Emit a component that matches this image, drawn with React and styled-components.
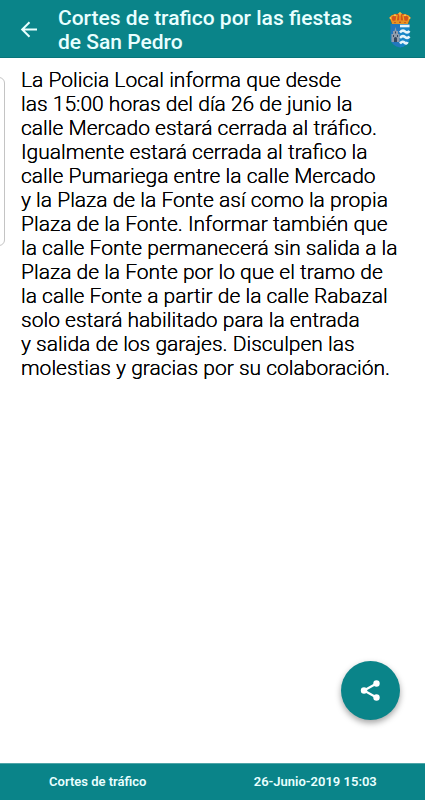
import React from "react";
import styled, { createGlobalStyle } from "styled-components";

const teal = "#0a8489";

const GlobalStyle = createGlobalStyle`
* {
  box-sizing: border-box;
  padding: 0;
  margin: 0;
}
body {
  background: #fff;
  font-family: Roboto, sans-serif;
}
`
const Page = styled.div`
  min-height: 100vh;
  display: flex;
  flex-direction: column;
`
const Header = styled.header`
  background: ${teal};
  border-bottom: 1px solid #08757a;
  display: flex;
  align-items: center;
  padding: 6px 14px 3px 18px;
`
const BackButton = styled.button`
  display: flex;
  width: 22px;
  height: 22px;
  border: none;
  background: none;
  cursor: pointer;
`
const Title = styled.h1`
  flex: 1;
  margin: 0 22px 0 18px;
  color: #e9ffff;
  font-size: 21px;
  font-weight: 500;
  line-height: 24px;
`
const Main = styled.main`
  flex: 1;
  padding: 10px 16px 10px 21px;
`
const Notice = styled.p`
  color: #000;
  font-size: 21px;
  font-weight: 300;
  line-height: 24px;
  text-shadow: 0 0 0 #000;
  white-space: pre-line;
`
const EdgeHandle = styled.div`
  position: absolute;
  top: 77px;
  left: -8px;
  width: 13px;
  height: 169px;
  border: 1px solid #c4c4c4;
  border-radius: 6px;
`
const ShareButton = styled.button`
  position: fixed;
  right: 25px;
  bottom: 80px;
  width: 59px;
  height: 59px;
  display: flex;
  align-items: center;
  justify-content: center;
  border: none;
  border-radius: 50%;
  background: ${teal};
  box-shadow: 0 3px 6px rgba(0, 0, 0, 0.36);
  cursor: pointer;
`
const Footer = styled.footer`
  height: 37px;
  background: ${teal};
  border-top: 1px solid #4fa5a8;
  display: grid;
  grid-template-columns: 46% 1fr;
  column-gap: 10px;
  align-items: center;
  text-align: center;
`
const FooterText = styled.span`
  color: #e9ffff;
  font-size: 13px;
  font-weight: 600;
  line-height: 16px;
`

const notice = `La Policia Local informa que desde
las 15:00 horas del día 26 de junio la
calle Mercado estará cerrada al tráfico.
Igualmente estará cerrada al trafico la
calle Pumariega entre la calle Mercado
y la Plaza de la Fonte así como la propia
Plaza de la Fonte. Informar también que
la calle Fonte permanecerá sin salida a la
Plaza de la Fonte por lo que el tramo de
la calle Fonte a partir de la calle Rabazal
solo estará habilitado para la entrada
y salida de los garajes. Disculpen las
molestias y gracias por su colaboración.`;

const BackIcon = () => (
  <svg width="22" height="22" viewBox="0 0 22 22" fill="none" stroke="#e9ffff" strokeWidth="2">
    <path d="M19 10.500H4.500M11.500 3.200L4.200 10.500l7.300 7.300" />
  </svg>
);

const ShareIcon = () => (
  <svg width="22" height="22" viewBox="0 0 22 22" fill="#fff">
    <path d="M16.500 3.500L4 10.500L16.500 17.500" fill="none" stroke="#fff" strokeWidth="2.200" />
    <circle cx="16.500" cy="3.500" r="3.200" />
    <circle cx="4" cy="10.500" r="3.200" />
    <circle cx="16.500" cy="17.500" r="3.200" />
  </svg>
);

const Crest = () => (
  <svg width="22" height="36" viewBox="0 0 22 36" role="img" aria-label="Escudo municipal">
    {/* shield */}
    <path d="M1.500 12h19v14.500c0 5-4.500 8-9.500 9-5-1-9.500-4-9.500-9z" fill="#2377bd" />
    <path d="M11 12h9.500v14.500c0 5-4.500 8-9.500 9z" fill="#1785c7" />
    {/* waves */}
    <g fill="none" stroke="#e6f4fa" strokeWidth="2.600">
      <path d="M11 14h9.500" />
      <path d="M11 20.500q2.500-3 5-1t4.500-0.500" />
      <path d="M11 26q2.500-3 5-1t4.500-0.500" />
      <path d="M11 31.500q2.500-3 4.500-1t3-0.500" />
    </g>
    {/* tower */}
    <path d="M2.500 30v-8h1.500v-3h1.500l1-4 1 4H9v3h1.500v8z" fill="#8f9cac" />
    <path d="M5 30v-3.500a1.500 1.500 0 0 1 3 0V30zM4 23h1v2H4zM8 23h1v2H8zM6 19.500h1v2H6z" fill="#35475f" />
    {/* crown */}
    <path d="M3 12L0.500 5.500Q4 1 11 2q7-1 10.500 3.500L19 12z" fill="#d2541c" />
    <g fill="none" stroke="#eda51f" strokeWidth="1.300">
      <path d="M3.500 10L1.500 5.500Q3.500 2 8 3.500L7 10M18.500 10l2-4.500Q18.500 2 14 3.500l1 6.500M11 2.500V10" />
    </g>
    <path d="M3 9q8-1.500 16 0v3H3z" fill="#e89322" />
    <path d="M10.300 0h1.400v1h1v1.200h-1v1.300h-1.400V2.200h-1V1h1z" fill="#f1b83b" />
    <g fill="#f4c65a">
      <circle cx="1.500" cy="6" r="1" />
      <circle cx="6" cy="3.200" r="1" />
      <circle cx="16" cy="3.200" r="1" />
      <circle cx="20.500" cy="6" r="1" />
    </g>
    <g fill="#a93220">
      <circle cx="6" cy="10.600" r="0.700" />
      <circle cx="11" cy="10.300" r="0.800" />
      <circle cx="16" cy="10.600" r="0.700" />
    </g>
  </svg>
);

const App = () => {
  return (
    <Page>
      <GlobalStyle />

      <Header>
        <BackButton aria-label="Volver">
          <BackIcon />
        </BackButton>
        <Title>Cortes de trafico por las fiestas de San Pedro</Title>
        <Crest />
      </Header>

      <Main>
        <Notice>{notice}</Notice>
      </Main>

      <EdgeHandle />
      <ShareButton aria-label="Compartir">
        <ShareIcon />
      </ShareButton>

      <Footer>
        <FooterText>Cortes de tráfico</FooterText>
        <FooterText>26-Junio-2019 15:03</FooterText>
      </Footer>
    </Page>
  );
}

export default App;
